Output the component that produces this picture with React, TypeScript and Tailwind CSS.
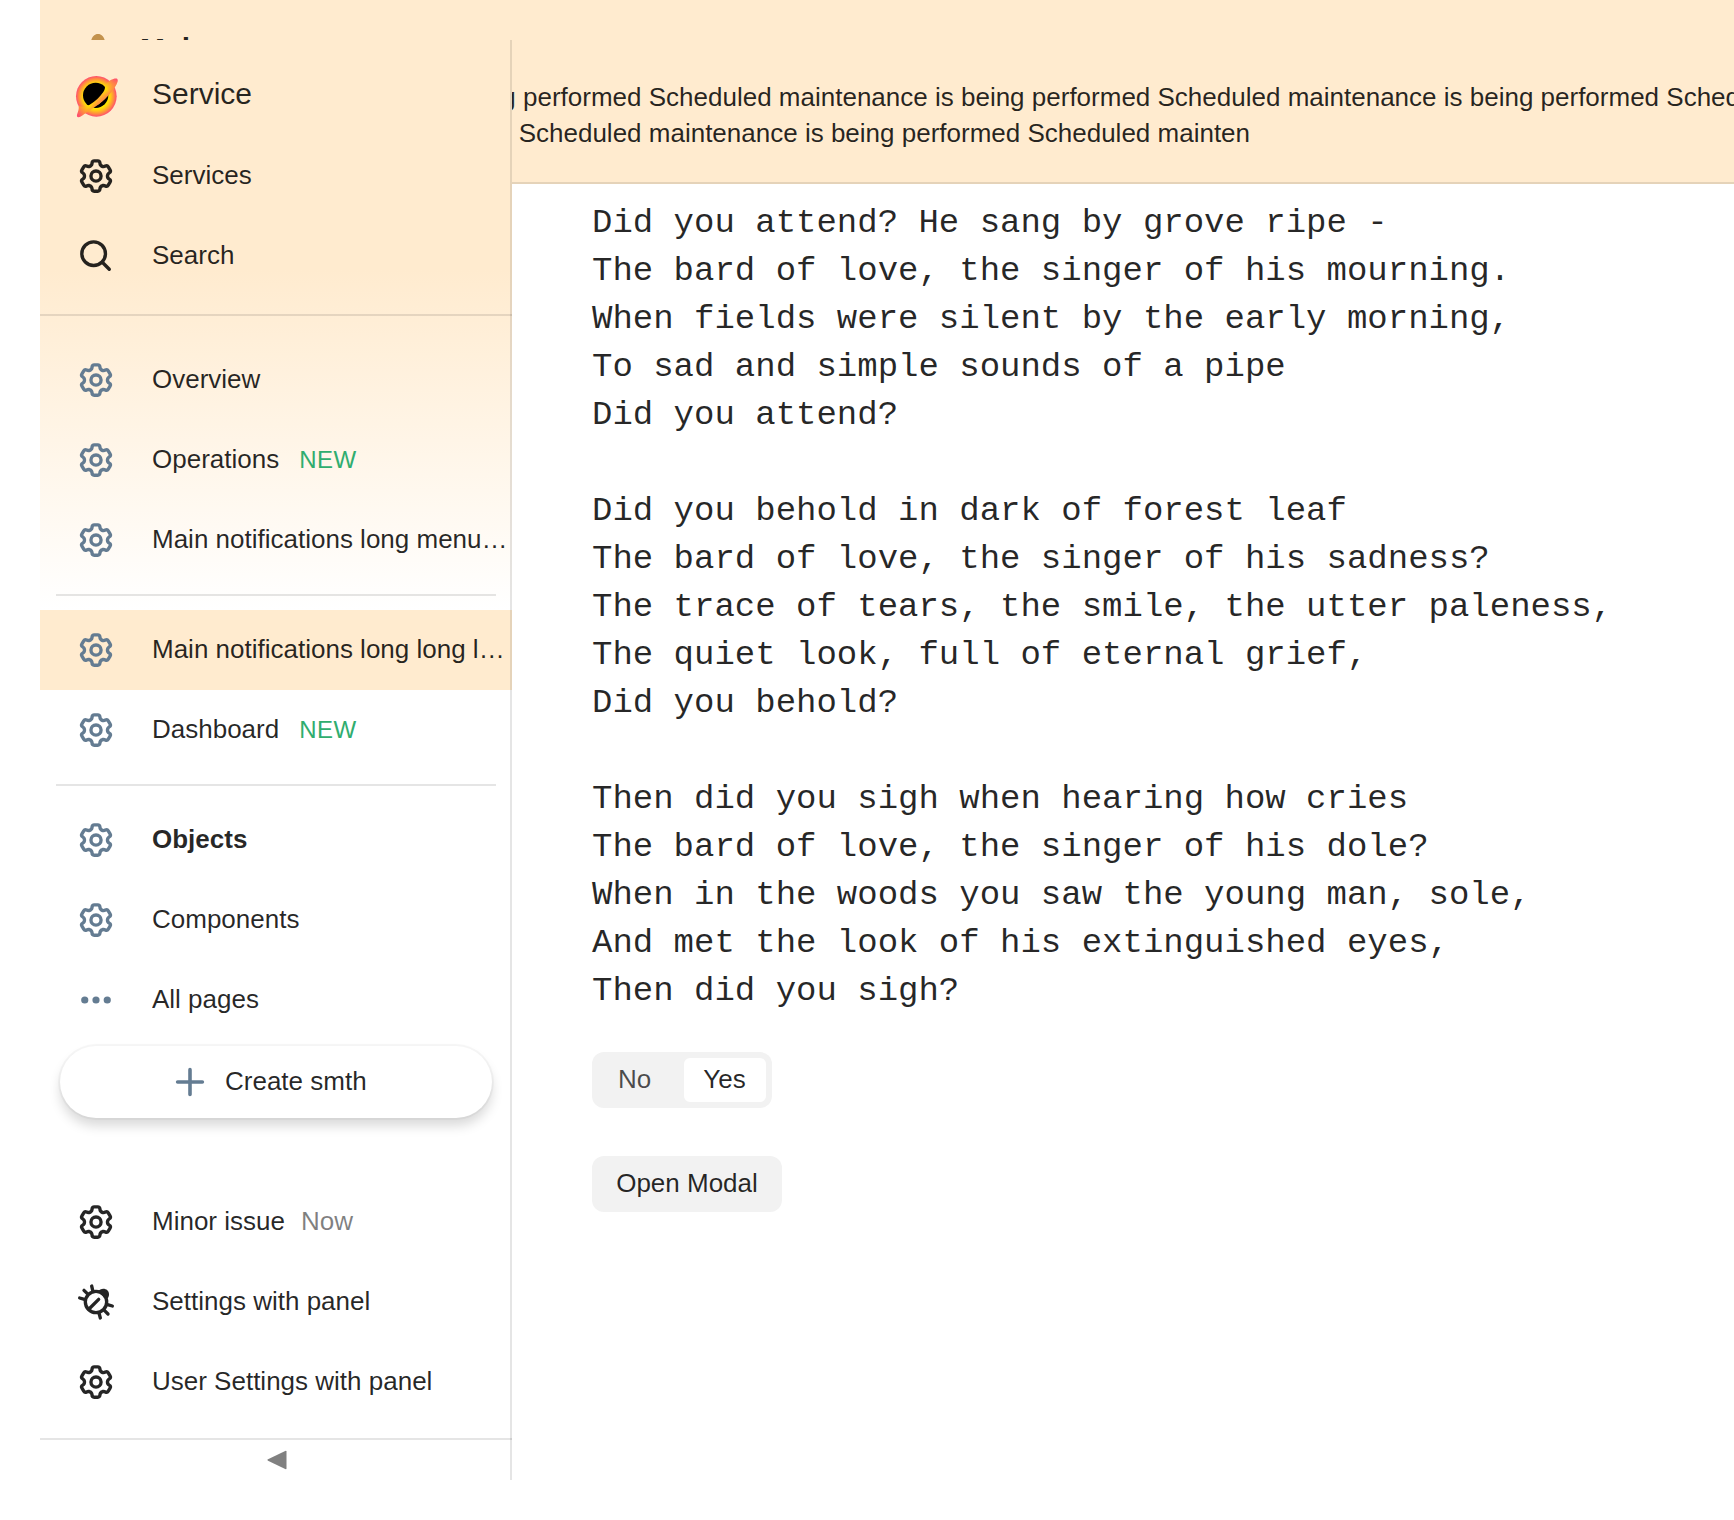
import React from "react";

const SANS = "font-['Liberation_Sans',Arial,sans-serif]";

function GearIcon() {
  return (
    <svg className="size-9 shrink-0" viewBox="0 0 16 16" fill="currentColor">
      <path
        fillRule="evenodd"
        clipRule="evenodd"
        d="M7.199 2H8.8a.2.2 0 0 1 .2.2c0 1.808 1.958 2.939 3.524 2.034a.199.199 0 0 1 .271.073l.802 1.388a.199.199 0 0 1-.073.272c-1.566.904-1.566 3.164 0 4.069a.199.199 0 0 1 .073.271l-.802 1.388a.199.199 0 0 1-.271.073C10.958 10.863 9 11.993 9 13.8a.2.2 0 0 1-.199.2H7.2a.199.199 0 0 1-.2-.2c0-1.808-1.958-2.938-3.524-2.034a.199.199 0 0 1-.272-.073l-.8-1.388a.199.199 0 0 1 .072-.271c1.566-.905 1.566-3.165 0-4.07a.199.199 0 0 1-.073-.271l.801-1.388a.199.199 0 0 1 .272-.073C5.042 5.138 7 4.007 7 2.2c0-.11.089-.199.199-.199ZM5.5 2.2c0-.94.76-1.7 1.699-1.7H8.8c.94 0 1.7.76 1.7 1.7a.85.85 0 0 0 1.274.734 1.7 1.7 0 0 1 2.32.622l.802 1.387a1.7 1.7 0 0 1-.622 2.323.85.85 0 0 0 0 1.47 1.7 1.7 0 0 1 .622 2.322l-.802 1.388a1.7 1.7 0 0 1-2.32.622.85.85 0 0 0-1.274.734c0 .938-.76 1.699-1.699 1.699H7.2a1.7 1.7 0 0 1-1.699-1.7.85.85 0 0 0-1.274-.734 1.7 1.7 0 0 1-2.32-.622l-.802-1.387a1.7 1.7 0 0 1 .622-2.322.85.85 0 0 0 0-1.47 1.7 1.7 0 0 1-.622-2.323l.801-1.387a1.7 1.7 0 0 1 2.321-.622A.85.85 0 0 0 5.5 2.2Z"
      />
      <circle cx="8" cy="8" r="2.25" fill="none" stroke="currentColor" strokeWidth="1.5" />
    </svg>
  );
}

function SearchIcon() {
  return (
    <svg className="size-9 shrink-0 text-black opacity-85" viewBox="0 0 16 16" fill="none" stroke="currentColor" strokeWidth="1.5" strokeLinecap="round">
      <circle cx="6.95" cy="6.95" r="5.25" />
      <path d="m10.8 10.8 3.1 3.1" />
    </svg>
  );
}

function DotsIcon() {
  return (
    <svg className="size-9 shrink-0" viewBox="0 0 16 16" fill="currentColor">
      <circle cx="3" cy="8" r="1.6" />
      <circle cx="8" cy="8" r="1.6" />
      <circle cx="13" cy="8" r="1.6" />
    </svg>
  );
}

function BugIcon() {
  return (
    <svg className="size-9 shrink-0 overflow-visible text-black opacity-85" viewBox="24 42 108 108" fill="none" stroke="currentColor" strokeWidth="10" strokeLinecap="round">
      <circle cx="78" cy="96" r="32" />
      <path d="M84 64c6-8 20-11 28-3s6 21-2 28z" fill="currentColor" stroke="none" />
      <path d="M65 48l4 17M42 61l10 10M29 84l17 5M110 103l17 5M103 121l11 11M87 129l4 15M86 88 57 117" />
    </svg>
  );
}

const BAND =
  "M152 60c8-4 17-6 20-3 3 4 0 12-5 20-7 13-15 23-24 31-11 13-22 22-35 30-12 9-24 17-35 24-7 5-13 9-18 10-5-1-5-6-3-11 3-8 5-13 4-23 11 4 23 2 33-4 17-10 31-23 41-38 5-8 6-14 4-19 5-6 11-13 18-17Z";

function LogoIcon() {
  return (
    <svg className="size-12 shrink-0" viewBox="36 36 144 144">
      <defs>
        <radialGradient id="glow" gradientUnits="userSpaceOnUse" cx="109" cy="109" r="61">
          <stop offset=".6" stopColor="#ffe600" />
          <stop offset=".72" stopColor="#ffc31a" />
          <stop offset=".86" stopColor="#ff8c40" />
          <stop offset="1" stopColor="#ff4d70" />
        </radialGradient>
        <linearGradient id="ring" gradientUnits="userSpaceOnUse" x1="58" y1="170" x2="170" y2="58">
          <stop offset="0" stopColor="#ff4d70" />
          <stop offset=".12" stopColor="#ff8c40" />
          <stop offset=".27" stopColor="#ffe000" />
          <stop offset=".5" stopColor="#ffb826" />
          <stop offset=".73" stopColor="#ffe000" />
          <stop offset=".88" stopColor="#ff8c40" />
          <stop offset="1" stopColor="#ff4d70" />
        </linearGradient>
        <linearGradient id="edge" gradientUnits="userSpaceOnUse" x1="110" y1="109" x2="127" y2="126">
          <stop offset=".2" stopColor="#ff8548" stopOpacity="0" />
          <stop offset="1" stopColor="#ff8048" />
        </linearGradient>
      </defs>
      <circle cx="109" cy="109" r="61" fill="url(#glow)" />
      <circle cx="107" cy="106" r="38" fill="#000" />
      <path d={BAND} fill="url(#ring)" />
      <path d={BAND} fill="url(#edge)" />
    </svg>
  );
}

type RowProps = {
  icon: React.ReactNode;
  label: string;
  tag?: React.ReactNode;
  muted?: boolean;
  selected?: boolean;
  bold?: boolean;
};

function Row({ icon, label, tag, muted, selected, bold }: RowProps) {
  return (
    <div className={`flex h-20 shrink-0 items-center ${selected ? "bg-[#ffebcf]" : ""}`}>
      <div className={`flex w-28 shrink-0 justify-center ${muted ? "text-[#647c92]" : ""}`}>{icon}</div>
      <div className={`min-w-0 truncate pr-1 pb-0.5 ${bold ? "font-bold" : ""}`}>{label}</div>
      {tag}
    </div>
  );
}

const newTag = <span className="ml-4 pb-px text-2xl/9 tracking-[0.5px] text-[#30ad6f]">NEW</span>;
const gear = <GearIcon />;

function Sidebar() {
  return (
    <aside className="absolute top-10 left-10 flex h-[1440px] w-[472px] flex-col overflow-hidden bg-white bg-[linear-gradient(to_bottom,#ffebcf_230px,#ffffff_570px)]">
      <div className="flex h-[276px] shrink-0 flex-col border-b-2 border-black/10 pt-4">
        <div className="flex h-20 items-center text-[30px]/9">
          <div className="flex w-28 shrink-0 justify-center">
            <LogoIcon />
          </div>
          <div className="pb-1">Service</div>
        </div>
        <Row icon={gear} label="Services" />
        <Row icon={<SearchIcon />} label="Search" />
      </div>

      <nav className="mt-6 flex flex-col">
        <Row icon={gear} label="Overview" muted />
        <Row icon={gear} label="Operations" tag={newTag} muted />
        <Row icon={gear} label="Main notifications long menu title" muted />
        <div className="mx-4 my-3.5 h-0.5 bg-black/10" />
        <Row icon={gear} label="Main notifications long long long long title" muted selected />
        <Row icon={gear} label="Dashboard" tag={newTag} muted />
        <div className="mx-4 my-3.5 h-0.5 bg-black/10" />
        <Row icon={gear} label="Objects" muted bold />
        <Row icon={gear} label="Components" muted />
        <Row icon={<DotsIcon />} label="All pages" muted />
      </nav>

      <button className="mx-5 mt-1.5 flex h-[72px] shrink-0 items-center gap-[17px] rounded-full bg-white pl-28 shadow-[0_0_0_2px_rgba(0,0,0,0.03),0_8px_12px_rgba(0,0,0,0.15)]">
        <svg className="size-9 text-[#647c92]" viewBox="0 0 16 16" fill="none" stroke="currentColor" strokeWidth="1.6" strokeLinecap="round">
          <path d="M8 2.5v11M2.5 8h11" />
        </svg>
        <span className="pb-0.5">Create smth</span>
      </button>

      <div className="mt-auto flex flex-col pb-4">
        <Row icon={gear} label="Minor issue" tag={<span className="ml-3 pb-0.5 text-black/50">Now</span>} />
        <Row icon={<BugIcon />} label="Settings with panel" />
        <Row icon={gear} label="User Settings with panel" />
      </div>
      <button className="flex h-[42px] shrink-0 items-center justify-center border-t-2 border-black/10 pl-0.5 text-[#808080]">
        <svg className="h-5 w-5" viewBox="0 0 20 20" fill="currentColor">
          <path d="M1 9.3 18.2.9q1.3-.5 1.3.6v17q0 1.1-1.3.6L1 10.7q-1.2-.7 0-1.4Z" />
        </svg>
      </button>
      <div className="pointer-events-none absolute inset-y-0 right-0 w-0.5 bg-black/10" />
    </aside>
  );
}

const phrase = "Scheduled maintenance is being performed ";

function Alert() {
  return (
    <header className="flex h-[184px] overflow-hidden border-b-2 border-black/10 bg-[#ffebcf]">
      <div className="flex w-[100px] shrink-0 justify-center pt-[34px] pl-[15px]">
        <svg className="h-9 w-8 text-[#c3924d]" viewBox="0 0 32 36" fill="currentColor">
          <path d="M16 0c3.500 0 5.500 2.500 6.700 6L31 25c1.500 4-1 7-4.500 7h-21C2 32-.5 29 1 25L9.300 6C10.500 2.500 12.500 0 16 0Z" />
        </svg>
      </div>
      <div className="shrink-0 pt-[29px] whitespace-nowrap">
        <div className="text-[30px]/10 font-bold">Main</div>
        <div className="mt-2.5">{phrase + phrase + phrase}Scheduled</div>
        <div>maintenance is being performed {phrase}Scheduled mainten</div>
      </div>
    </header>
  );
}

const poem = `Did you attend? He sang by grove ripe -
The bard of love, the singer of his mourning.
When fields were silent by the early morning,
To sad and simple sounds of a pipe
Did you attend?

Did you behold in dark of forest leaf
The bard of love, the singer of his sadness?
The trace of tears, the smile, the utter paleness,
The quiet look, full of eternal grief,
Did you behold?

Then did you sigh when hearing how cries
The bard of love, the singer of his dole?
When in the woods you saw the young man, sole,
And met the look of his extinguished eyes,
Then did you sigh?`;

export default function App() {
  return (
    <div className={`relative h-[1520px] w-[1734px] overflow-hidden bg-white pl-10 text-[26px]/9 text-black/85 ${SANS}`}>
      <Alert />
      <main className="flex flex-col items-start pt-[15px] pl-[552px]">
        <pre className="font-['Liberation_Mono','Courier_New',monospace] text-[34px]/[48px]">{poem}</pre>
        <div className="mt-[37px] flex h-14 w-[180px] items-center rounded-xl bg-[#f2f2f2] p-1.5">
          <span className="flex-1 pb-0.5 pl-5 text-black/70">No</span>
          <span className="flex h-11 w-[82px] items-center justify-center rounded-md bg-white pr-px pb-0.5">Yes</span>
        </div>
        <button className="mt-12 flex h-14 w-[190px] items-center justify-center rounded-xl bg-[#f2f2f2] pb-0.5">Open Modal</button>
      </main>
      <Sidebar />
    </div>
  );
}
